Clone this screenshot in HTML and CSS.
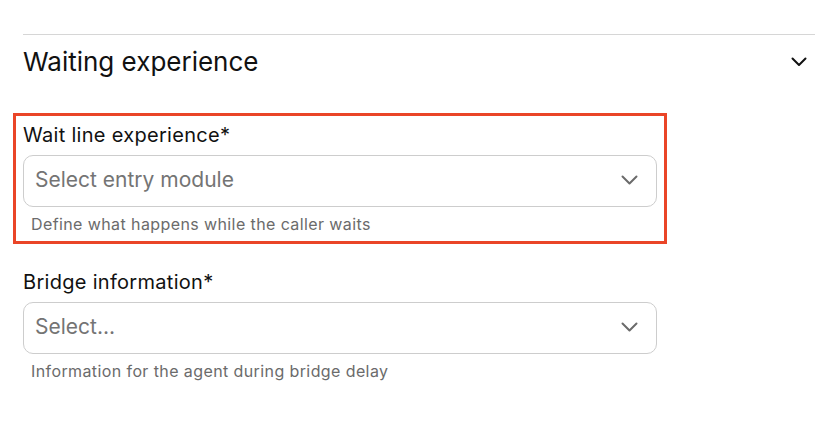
FILE: index.html
```html
<!DOCTYPE html>
<html lang="en">
<head>
<meta charset="utf-8">
<title>Waiting experience</title>
<link rel="stylesheet" href="styles.css">
</head>
<body>
<section class="section">
  <div class="section-header">
    <h2 class="section-title">Waiting experience</h2>
    <svg class="chevron chevron--dark" width="16" height="10" viewBox="0 0 16 10" aria-hidden="true"><path d="M1.5 1.5 L8 8 L14.5 1.5" fill="none" stroke="currentColor" stroke-width="2" stroke-linecap="round" stroke-linejoin="round"/></svg>
  </div>
  <div class="fields">
    <div class="field field--highlight">
      <label class="field-label">Wait line experience*</label>
      <div class="select">
        <span class="select-placeholder">Select entry module</span>
        <svg class="chevron" width="17" height="10" viewBox="0 0 17 10" aria-hidden="true"><path d="M1.5 1.5 L8.5 8.5 L15.5 1.5" fill="none" stroke="currentColor" stroke-width="2" stroke-linecap="round" stroke-linejoin="round"/></svg>
      </div>
      <p class="field-help">Define what happens while the caller waits</p>
    </div>
    <div class="field">
      <label class="field-label">Bridge information*</label>
      <div class="select">
        <span class="select-placeholder">Select...</span>
        <svg class="chevron" width="17" height="10" viewBox="0 0 17 10" aria-hidden="true"><path d="M1.5 1.5 L8.5 8.5 L15.5 1.5" fill="none" stroke="currentColor" stroke-width="2" stroke-linecap="round" stroke-linejoin="round"/></svg>
      </div>
      <p class="field-help">Information for the agent during bridge delay</p>
    </div>
  </div>
</section>
</body>
</html>
```
FILE: styles.css
```css
* { box-sizing: border-box; }
html, body { margin: 0; padding: 0; background: #fff; }
body {
  font-family: "Inter", "DejaVu Sans", sans-serif;
  color: #111;
  width: 838px;
  height: 430px;
  overflow: hidden;
}
.section {
  margin: 34px 23px 0 23px;
  border-top: 1px solid #d6d6d6;
}
.section-header {
  display: flex;
  align-items: center;
  justify-content: space-between;
  padding-top: 11px;
  padding-right: 8px;
}
.section-title {
  margin: 0;
  font-size: 26px;
  line-height: 32px;
  font-weight: 400;
  color: #111;
}
.chevron { display: block; color: #6b6b6b; }
.chevron--dark { color: #111; }
.fields {
  display: flex;
  flex-direction: column;
  gap: 36px;
  padding-top: 45px;
}
.field {
  width: 634px;
  display: flex;
  flex-direction: column;
}
.field--highlight {
  outline: 3px solid #ea4528;
  outline-offset: 7px;
}
.field-label {
  font-size: 20px;
  line-height: 24px;
  letter-spacing: 0.3px;
  color: #111;
  margin-bottom: 8px;
}
.select {
  height: 52px;
  border: 1px solid #cdcdcd;
  border-radius: 10px;
  display: flex;
  align-items: center;
  justify-content: space-between;
  padding: 0 18px 3px 11px;
}
.select-placeholder {
  font-size: 21px;
  color: #747474;
}
.field-help {
  margin: 7px 0 0 8px;
  font-size: 16px;
  line-height: 20px;
  letter-spacing: 0.4px;
  color: #6b6b6b;
}
```
